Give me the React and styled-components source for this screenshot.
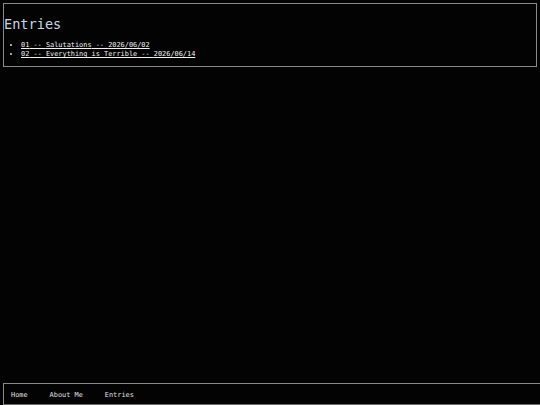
import styled, { createGlobalStyle } from 'styled-components';

const GlobalStyle = createGlobalStyle`
    html, body {
        margin: 0;
        padding: 0;
        background-color: #030303;
    }
    body {
        font-family: "DejaVu Sans Mono", "Liberation Mono", monospace;
        color: #d8d8d8;
    }
`;

const Page = styled.div`
    display: flex;
    flex-direction: column;
    min-height: 100vh;
    box-sizing: border-box;
    padding: 3px 0 0 3px;
`;

const Panel = styled.section`
    border: 1px solid #8a8a8a;
    margin-right: 3px;
    padding: 0 0 7px 0;
`;

const Title = styled.h1`
    margin: 12px 0 9px 0;
    font-size: 13.6px;
    line-height: 16px;
    font-weight: normal;
    color: #c6d6e6;
`;

const List = styled.ul`
    margin: 0;
    padding-left: 17px;
    font-size: 6.9px;
    line-height: 9px;
`;

const Link = styled.a`
    color: #f2f2f2;
    text-decoration: underline;
`;

const Footer = styled.footer`
    margin-top: auto;
    display: flex;
    gap: 22px;
    align-items: center;
    height: 19px;
    padding: 1px 0 0 7px;
    box-sizing: content-box;
    border: 1px solid #8a8a8a;
    border-right: none;
    border-bottom-color: #6a6a6a;
    font-size: 6.9px;
    color: #e0e0e0;
`;

const entries = [
    { id: '01', name: 'Salutations', date: '2026/06/02' },
    { id: '02', name: 'Everything is Terrible', date: '2026/06/14' },
];

const App = () => {
    return (
        <>
            <GlobalStyle />
            <Page>
                <Panel>
                    <Title>Entries</Title>
                    <List>
                        {entries.map((entry) => (
                            <li key={entry.id}>
                                <Link href="#">{entry.id} -- {entry.name} -- {entry.date}</Link>
                            </li>
                        ))}
                    </List>
                </Panel>
                <Footer>
                    <span>Home</span>
                    <span>About Me</span>
                    <span>Entries</span>
                </Footer>
            </Page>
        </>
    );
};

export default App;
